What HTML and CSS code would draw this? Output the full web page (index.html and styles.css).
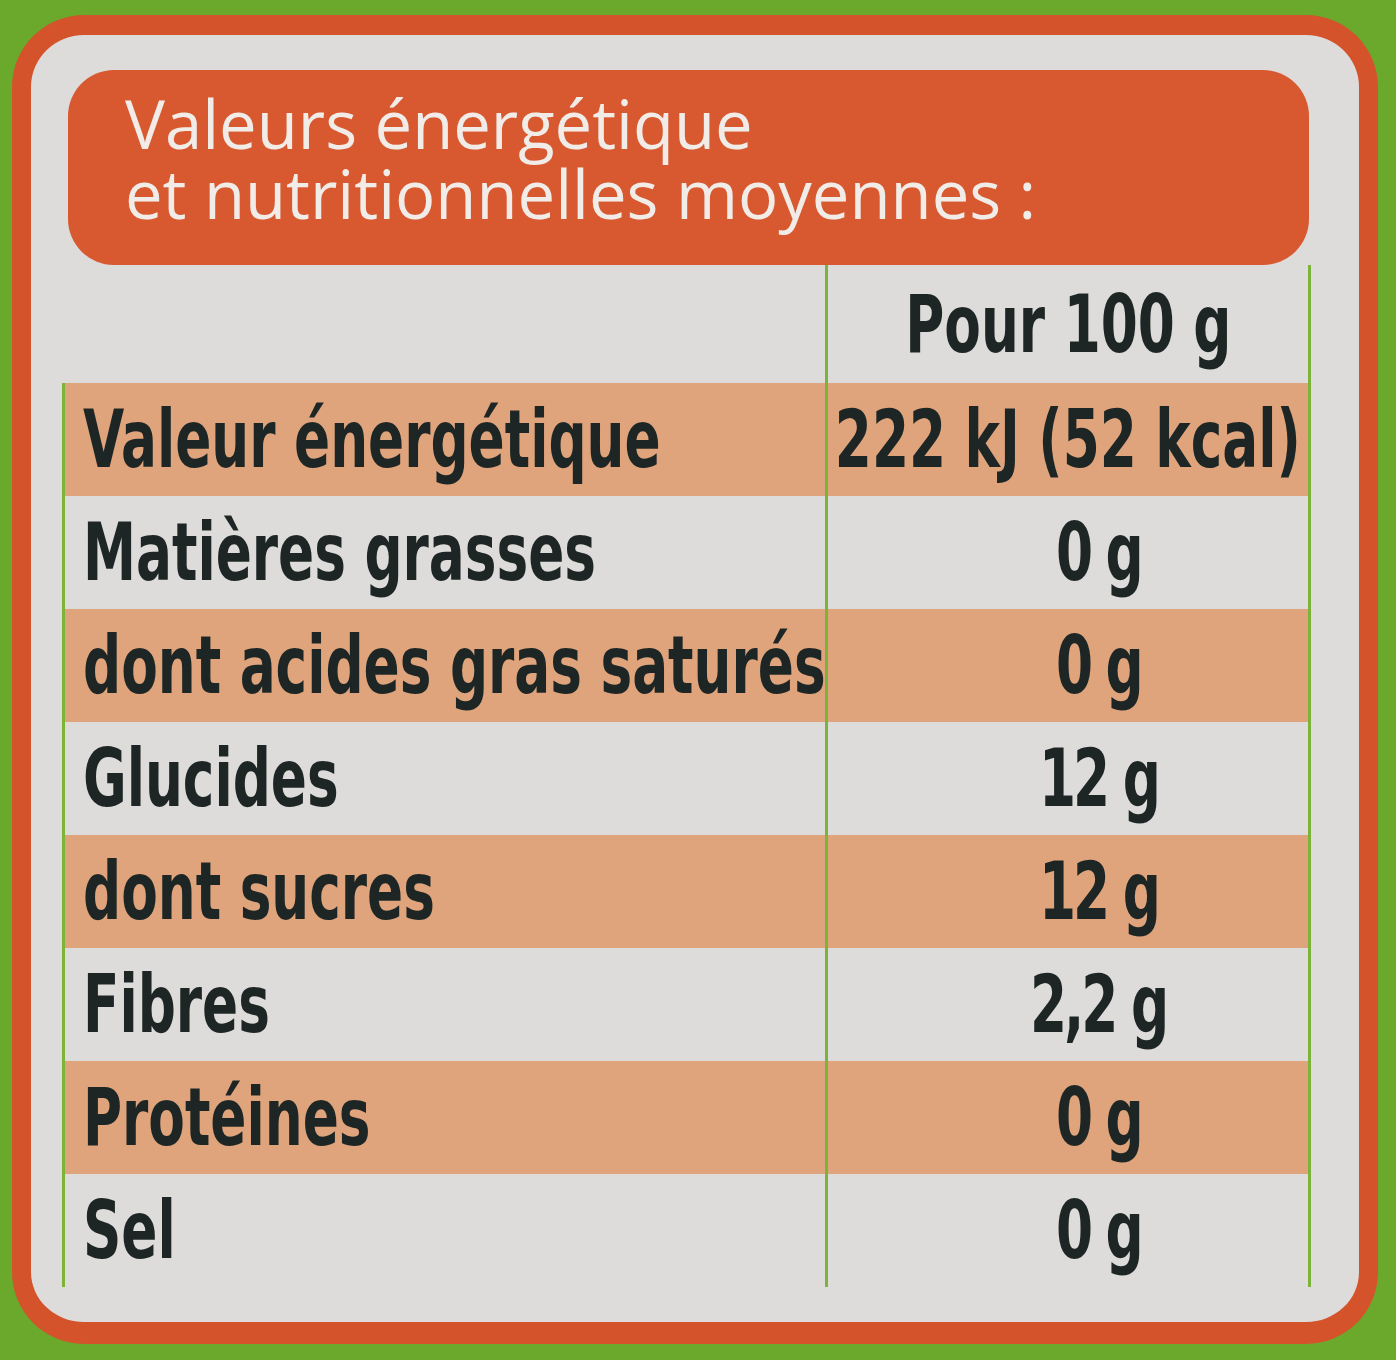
FILE: index.html
```html
<!DOCTYPE html>
<html lang="fr">
<head>
<meta charset="utf-8">
<title>Valeurs nutritionnelles</title>
<link rel="stylesheet" href="styles.css">
</head>
<body>
<div class="card">
  <div class="title">
    <p class="title-line">Valeurs énergétique</p>
    <p class="title-line">et nutritionnelles moyennes :</p>
  </div>
  <div class="table">
    <div class="row head"><div class="label"></div><div class="value"><span class="txt">Pour 100 g</span></div></div>
    <div class="row alt"><div class="label"><span class="txt">Valeur énergétique</span></div><div class="value"><span class="txt">222 kJ (52 kcal)</span></div></div>
    <div class="row"><div class="label"><span class="txt">Matières grasses</span></div><div class="value num"><span class="txt">0 g</span></div></div>
    <div class="row alt"><div class="label"><span class="txt">dont acides gras saturés</span></div><div class="value num"><span class="txt">0 g</span></div></div>
    <div class="row"><div class="label"><span class="txt">Glucides</span></div><div class="value num"><span class="txt">12 g</span></div></div>
    <div class="row alt"><div class="label"><span class="txt">dont sucres</span></div><div class="value num"><span class="txt">12 g</span></div></div>
    <div class="row"><div class="label"><span class="txt">Fibres</span></div><div class="value num"><span class="txt">2,2 g</span></div></div>
    <div class="row alt"><div class="label"><span class="txt">Protéines</span></div><div class="value num"><span class="txt">0 g</span></div></div>
    <div class="row"><div class="label"><span class="txt">Sel</span></div><div class="value num"><span class="txt">0 g</span></div></div>
  </div>
</div>
</body>
</html>
```
FILE: styles.css
```css
html, body {
  margin: 0;
  padding: 0;
}
body {
  background: #6aa92c;
  width: 1396px;
  height: 1360px;
  overflow: hidden;
  padding-top: 15px;
  box-sizing: border-box;
}
.card {
  box-sizing: border-box;
  margin-left: 12px;
  width: 1366px;
  height: 1329px;
  background: #dddcda;
  border: 19px solid #d4532b;
  border-top-width: 20px;
  border-bottom-width: 22px;
  border-radius: 72px;
  padding: 35px 48px 0 31px;
}
.title {
  margin: 0 2px 0 6px;
  height: 195px;
  box-sizing: border-box;
  background: #d8582f;
  border-radius: 46px;
  padding: 18px 0 0 57px;
  color: #f1ece8;
  font-family: "Open Sans", "Liberation Sans", sans-serif;
  font-size: 67px;
  font-weight: 400;
}
.title-line {
  margin: 0;
  line-height: 70px;
}
.table {
  display: flex;
  flex-direction: column;
  font-family: "DejaVu Sans Condensed", "DejaVu Sans", sans-serif;
  font-weight: 700;
  color: #1d2624;
}
.row {
  display: flex;
  height: 113px;
  align-items: stretch;
}
.row.head {
  height: 118px;
}
.row.alt {
  background: #e0a47d;
}
.row.head .label {
  border-left-color: transparent;
}
.label {
  width: 763px;
  box-sizing: border-box;
  border-left: 3px solid #7bb438;
  padding-left: 18px;
  display: flex;
  align-items: center;
  font-size: 80px;
  white-space: nowrap;
}
.label .txt {
  display: inline-block;
  transform: scaleX(0.74);
  transform-origin: left center;
}
.value {
  flex: 1;
  box-sizing: border-box;
  border-left: 3px solid #7bb438;
  border-right: 3px solid #7bb438;
  display: flex;
  align-items: center;
  justify-content: center;
  font-size: 80px;
  white-space: nowrap;
}
.value.num {
  padding-left: 60px;
}
.value .txt {
  display: inline-block;
  margin: 0 -200px;
  transform: scaleX(0.74);
  transform-origin: center center;
}
.value.num .txt {
  letter-spacing: -4px;
}
```
